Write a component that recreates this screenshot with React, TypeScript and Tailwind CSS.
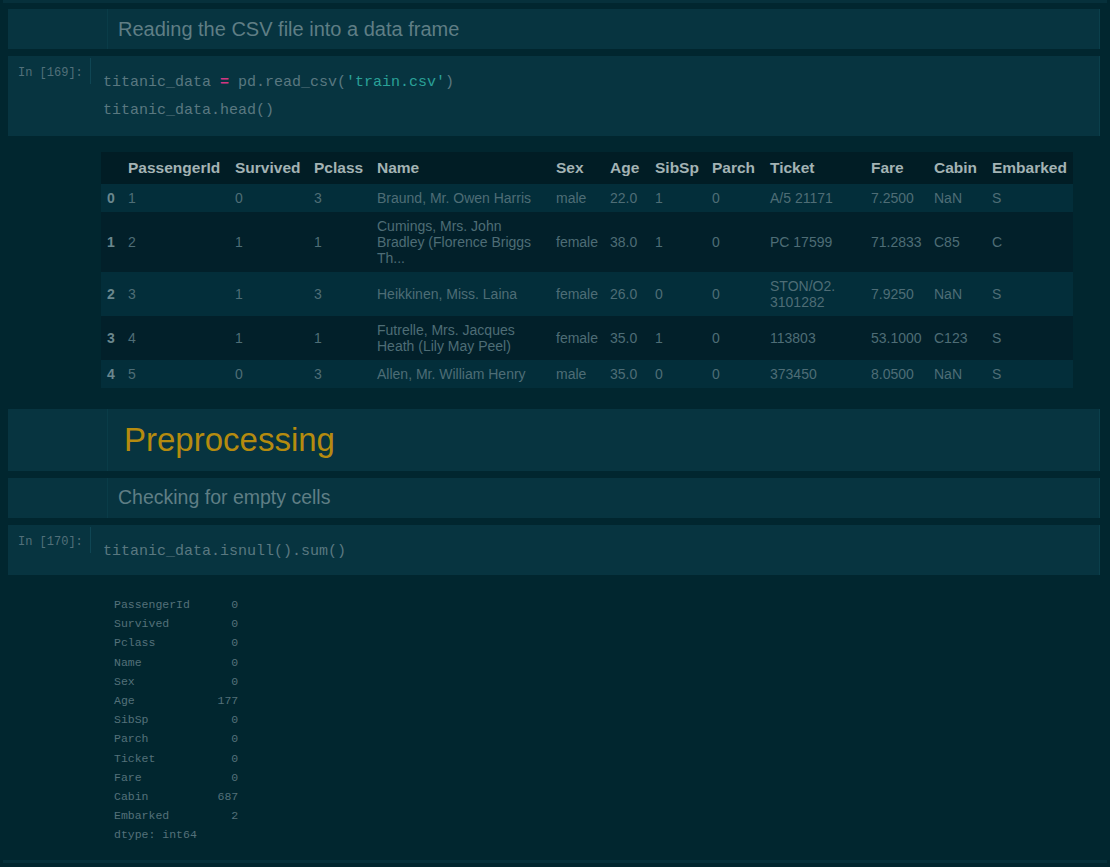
import React from "react";

const mono = "font-['Liberation_Mono','DejaVu_Sans_Mono',monospace]";
const sans = "font-['Liberation_Sans',Arial,sans-serif]";

type Row = {
  idx: number;
  cells: string[];
  dark: boolean;
};

const columns = [
  { label: "", w: "w-[22px]" },
  { label: "PassengerId", w: "w-[107px]" },
  { label: "Survived", w: "w-[79px]" },
  { label: "Pclass", w: "w-[63px]" },
  { label: "Name", w: "w-[179px]" },
  { label: "Sex", w: "w-[54px]" },
  { label: "Age", w: "w-[45px]" },
  { label: "SibSp", w: "w-[57px]" },
  { label: "Parch", w: "w-[58px]" },
  { label: "Ticket", w: "w-[101px]" },
  { label: "Fare", w: "w-[63px]" },
  { label: "Cabin", w: "w-[58px]" },
  { label: "Embarked", w: "w-[86px]" },
];

const rows: Row[] = [
  { idx: 0, dark: false, cells: ["1", "0", "3", "Braund, Mr. Owen Harris", "male", "22.0", "1", "0", "A/5 21171", "7.2500", "NaN", "S"] },
  { idx: 1, dark: true, cells: ["2", "1", "1", "Cumings, Mrs. John Bradley (Florence Briggs Th...", "female", "38.0", "1", "0", "PC 17599", "71.2833", "C85", "C"] },
  { idx: 2, dark: false, cells: ["3", "1", "3", "Heikkinen, Miss. Laina", "female", "26.0", "0", "0", "STON/O2. 3101282", "7.9250", "NaN", "S"] },
  { idx: 3, dark: true, cells: ["4", "1", "1", "Futrelle, Mrs. Jacques Heath (Lily May Peel)", "female", "35.0", "1", "0", "113803", "53.1000", "C123", "S"] },
  { idx: 4, dark: false, cells: ["5", "0", "3", "Allen, Mr. William Henry", "male", "35.0", "0", "0", "373450", "8.0500", "NaN", "S"] },
];

const nullCounts = `PassengerId      0
Survived         0
Pclass           0
Name             0
Sex              0
Age            177
SibSp            0
Parch            0
Ticket           0
Fare             0
Cabin          687
Embarked         2
dtype: int64`;

function MarkdownCell({ children, height, big }: { children: React.ReactNode; height: string; big?: boolean }) {
  return (
    <div className={`ml-[8px] mr-[10px] flex ${height} bg-[#073440] border-r border-[#0b3f4b]`}>
      <div className="w-[100px] shrink-0 border-r border-[#0a3c48]" />
      <div className={`flex items-center ${big ? "pl-[16px]" : "pl-[10px]"} ${sans}`}>{children}</div>
    </div>
  );
}

function CodeCell({ prompt, height, children }: { prompt: string; height: string; children: React.ReactNode }) {
  return (
    <div className={`ml-[8px] mr-[10px] flex ${height} bg-[#073440] border-r border-[#0b3f4b]`}>
      <div className={`w-[82px] shrink-0 pt-[10px] pl-[10px] text-[12px] leading-[14px] text-[#52707a] ${mono}`}>
        {prompt}
      </div>
      <div className="flex">
        <div className="w-px h-[26px] mt-[2px] bg-[#0f4654]" />
        <div className={`pl-[12px] pt-[13px] text-[15px] leading-[28px] text-[#5a7880] whitespace-pre ${mono}`}>
          {children}
        </div>
      </div>
    </div>
  );
}

export default function App() {
  return (
    <div className="min-h-[867px] bg-[#01262f] overflow-hidden">
      <div className="h-[3px] mx-[3px] bg-[#06303b]" />
      <div className="pt-[6px] flex flex-col gap-[7px]">
        <MarkdownCell height="h-[40px]">
          <span className="text-[20px] text-[#5f7e85]">Reading the CSV file into a data frame</span>
        </MarkdownCell>

        <CodeCell prompt="In [169]:" height="h-[80px]">
          <div>
            titanic_data <span className="text-[#d33682] font-bold">=</span> pd.read_csv(
            <span className="text-[#2aa198]">'train.csv'</span>)
          </div>
          <div>titanic_data.head()</div>
        </CodeCell>
      </div>

      {/* dataframe output */}
      <div className="pl-[101px] pt-[16px] pb-[21px]">
        <table className={`table-fixed border-collapse w-[972px] text-[14px] leading-[16px] ${sans}`}>
          <thead>
            <tr className="bg-[#011d25] h-[32px]">
              {columns.map((c, i) => (
                <th
                  key={i}
                  className={`${c.w} pl-[5px] pr-[6px] text-left align-middle font-bold text-[15.5px] text-[#a3b3b4]`}
                >
                  {c.label}
                </th>
              ))}
            </tr>
          </thead>
          <tbody>
            {rows.map((r) => (
              <tr key={r.idx} className={r.dark ? "bg-[#02202a]" : "bg-[#032e3a]"}>
                <th className="pl-[6px] py-[6px] text-left align-middle font-bold text-[#6a878e]">{r.idx}</th>
                {r.cells.map((v, i) => (
                  <td key={i} className="pl-[5px] pr-[6px] py-[6px] align-middle text-[#4e6d76]">
                    {v}
                  </td>
                ))}
              </tr>
            ))}
          </tbody>
        </table>
      </div>

      <div className="flex flex-col gap-[7px]">
        <MarkdownCell height="h-[62px]" big>
          <span className="text-[33px] text-[#b58b0f]">Preprocessing</span>
        </MarkdownCell>

        <MarkdownCell height="h-[40px]">
          <span className="text-[19.5px] text-[#5f7e85]">Checking for empty cells</span>
        </MarkdownCell>

        <CodeCell prompt="In [170]:" height="h-[50px]">
          <div>titanic_data.isnull().sum()</div>
        </CodeCell>
      </div>

      <pre className={`pl-[114px] pt-[20px] text-[11.5px] leading-[19.2px] text-[#54717a] ${mono}`}>{nullCounts}</pre>

      <div className="mt-[15px] mx-[3px] h-[3px] bg-[#06303b]" />
    </div>
  );
}
